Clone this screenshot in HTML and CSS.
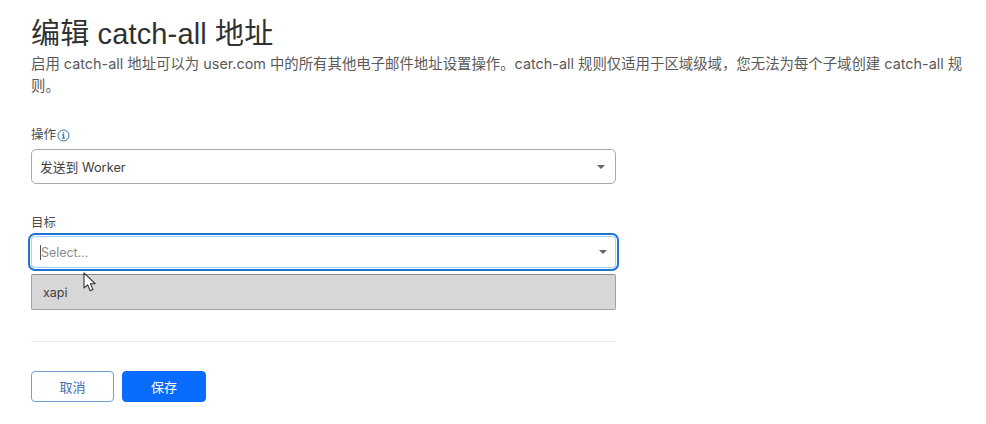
FILE: index.html
```html
<!DOCTYPE html>
<html lang="zh-CN">
<head>
    <meta charset="UTF-8">
    <meta name="viewport" content="width=device-width, initial-scale=1.0">
    <title>编辑 catch-all 地址</title>
    <link rel="stylesheet" href="styles.css">
</head>
<body>
    <div class="content">
        <h1>编辑 catch-all 地址</h1>
        <p class="intro">启用 catch-all 地址可以为 user.com 中的所有其他电子邮件地址设置操作。catch-all 规则仅适用于区域级域，您无法为每个子域创建 catch-all 规则。</p>
        <form class="edit-form">
            <div class="field field-action">
                <div class="field-label">操作
                    <svg class="info-icon" width="13" height="13" viewBox="0 0 13 13">
                        <circle cx="6.5" cy="6.5" r="5.5" fill="none" stroke="#2f6fb5" stroke-width="1"/>
                        <rect x="5.9" y="5.5" width="1.3" height="3.6" fill="#2f6fb5"/>
                        <rect x="4.9" y="8.8" width="3.3" height="0.9" fill="#2f6fb5"/>
                        <rect x="5" y="5.3" width="2" height="0.9" fill="#2f6fb5"/>
                        <rect x="5.9" y="3.2" width="1.3" height="1.3" fill="#2f6fb5"/>
                    </svg>
                </div>
                <div class="select">
                    <span class="select-value">发送到 Worker</span>
                    <span class="caret"></span>
                </div>
            </div>
            <div class="field field-target">
                <div class="field-label">目标</div>
                <div class="select select-focus">
                    <span class="text-cursor"></span>
                    <span class="select-placeholder">Select...</span>
                    <span class="caret"></span>
                </div>
                <div class="option">xapi</div>
            </div>
            <hr class="divider">
            <div class="actions">
                <button type="button" class="btn btn-cancel">取消</button>
                <button type="submit" class="btn btn-save">保存</button>
            </div>
        </form>
    </div>
    <svg class="mouse-pointer" width="16" height="22" viewBox="0 0 16 22">
        <path d="M1 1 L1 16 L4.6 12.8 L7.2 18.8 L10 17.6 L7.4 11.8 L12.2 11.6 Z" fill="#fff" stroke="#333" stroke-width="1.1" stroke-linejoin="round"/>
    </svg>
</body>
</html>
```

FILE: styles.css
```css
html, body { margin: 0; padding: 0; background-color: #fff; }
body { font-family: Inter, "Liberation Sans", "Noto Sans CJK SC", sans-serif; color: #36393a; overflow: hidden; }
.content { padding: 15px 16px 0 31px; }
h1 { margin: 0; font-family: "Liberation Sans", "Noto Sans CJK SC", sans-serif; font-size: 29px; line-height: 38px; font-weight: 400; letter-spacing: 0.15px; color: #313131; }
.intro { margin: 0; font-size: 14.4px; line-height: 22px; color: #595959; }
.edit-form { width: 585px; margin-top: 29px; }
.field-label { display: flex; align-items: center; gap: 1px; font-size: 12.5px; line-height: 18px; color: #4d4d4d; margin-bottom: 5px; }
.field-target { margin-top: 30px; }
.field-target .field-label { margin-bottom: 4px; }
.select { display: flex; align-items: center; height: 33px; padding: 0 10px 0 8px; border: 1px solid #a9a9a9; border-radius: 5px; font-size: 12.8px; color: #404040; }
.select-value { flex: 1; }
.select-placeholder { flex: 1; font-size: 12.4px; color: #8c8c8c; }
.caret { width: 0; height: 0; border-left: 4.5px solid transparent; border-right: 4.5px solid transparent; border-top: 4.5px solid #666; }
.select-focus { height: 30px; padding-right: 8px; border-color: #a9d0f5; border-radius: 4px; box-shadow: 0 0 0 1px #fff, 0 0 0 3px #1f74d0; }
.text-cursor { width: 1px; height: 15px; background-color: #555; }
.option { display: flex; align-items: center; height: 34px; margin-top: 6px; padding-left: 11px; background-color: #d7d7d7; border: 1px solid #a3a3a3; border-top-color: #8c8c8c; border-radius: 2px; font-size: 12.5px; color: #3c3c3c; }
.divider { height: 1px; margin: 31px 0 0; border: 0; background-color: #e8e8e8; }
.actions { display: flex; gap: 8px; margin-top: 29px; }
.btn { width: 84px; height: 31px; padding: 0; border-radius: 4px; font-family: inherit; font-size: 13px; }
.btn-cancel { width: 83px; background-color: #fff; border: 1px solid #6fa0d2; color: #3b6fb0; }
.btn-save { background-color: #0a6cff; border: 1px solid #0a6cff; color: #fff; }
.mouse-pointer { position: absolute; left: 83px; top: 272px; }
```
